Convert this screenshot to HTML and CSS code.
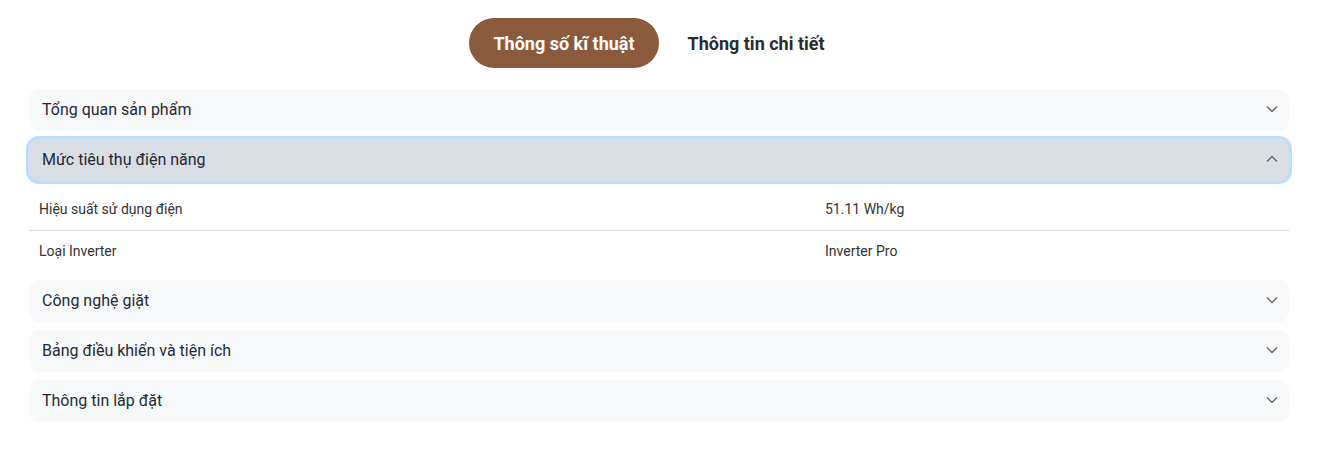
FILE: index.html
```html
<!DOCTYPE html>
<html lang="vi">
<head>
<meta charset="utf-8">
<title>Thông số kĩ thuật</title>
<link rel="stylesheet" href="styles.css">
</head>
<body>
<div class="page">
  <div class="tabs">
    <button class="tab tab-active">Thông số kĩ thuật</button>
    <button class="tab">Thông tin chi tiết</button>
  </div>
  <div class="accordion">
    <div class="item">
      <div class="head"><span>Tổng quan sản phẩm</span>
        <svg class="chev" width="12" height="8" viewBox="0 0 12 8"><path d="M1 1.5 L6 6.5 L11 1.5" fill="none" stroke="#666" stroke-width="1.4"/></svg>
      </div>
    </div>
    <div class="item open">
      <div class="head"><span>Mức tiêu thụ điện năng</span>
        <svg class="chev" width="12" height="8" viewBox="0 0 12 8"><path d="M1 6.5 L6 1.5 L11 6.5" fill="none" stroke="#666" stroke-width="1.4"/></svg>
      </div>
    </div>
    <div class="specs">
      <div class="row"><div class="label">Hiệu suất sử dụng điện</div><div class="value">51.11 Wh/kg</div></div>
      <div class="row"><div class="label">Loại Inverter</div><div class="value">Inverter Pro</div></div>
    </div>
    <div class="item">
      <div class="head"><span>Công nghệ giặt</span>
        <svg class="chev" width="12" height="8" viewBox="0 0 12 8"><path d="M1 1.5 L6 6.5 L11 1.5" fill="none" stroke="#666" stroke-width="1.4"/></svg>
      </div>
    </div>
    <div class="item">
      <div class="head"><span>Bảng điều khiển và tiện ích</span>
        <svg class="chev" width="12" height="8" viewBox="0 0 12 8"><path d="M1 1.5 L6 6.5 L11 1.5" fill="none" stroke="#666" stroke-width="1.4"/></svg>
      </div>
    </div>
    <div class="item">
      <div class="head"><span>Thông tin lắp đặt</span>
        <svg class="chev" width="12" height="8" viewBox="0 0 12 8"><path d="M1 1.5 L6 6.5 L11 1.5" fill="none" stroke="#666" stroke-width="1.4"/></svg>
      </div>
    </div>
  </div>
</div>
</body>
</html>
```
FILE: styles.css
```css
* { box-sizing: border-box; }
html, body { margin: 0; padding: 0; background: #fff; }
body { font-family: Roboto, "Noto Sans", Arial, sans-serif; color: #1f2937; }
.page { padding: 18px 37px 0 29px; }
.tabs { display: flex; justify-content: center; gap: 5px; margin-bottom: 21px; }
.tab {
  font-family: Roboto, Arial, sans-serif;
  font-size: 18px; font-weight: 700;
  height: 50px; padding: 0 24px;
  border: 0; border-radius: 25px;
  background: transparent; color: #2b2b2b;
  cursor: pointer;
}
.tab-active { background: #8b5a3c; color: #fff; }
.accordion { display: flex; flex-direction: column; gap: 8px; }
.item { background: #f8f9fa; border-radius: 10px; }
.head {
  height: 42px; display: flex; align-items: center; justify-content: space-between;
  padding: 0 11px 2px 13px; font-size: 16px; color: #1f2937;
}
.chev { display: block; }
.item.open { background: #d9dee5; box-shadow: 0 0 0 3px #bfdbfe; }
.specs { display: flex; flex-direction: column; }
.row {
  display: grid; grid-template-columns: 786px 1fr;
  box-sizing: content-box;
  height: 39px; padding-bottom: 2px;
  align-items: center; font-size: 14px; color: #333;
}
.row + .row { border-top: 1px solid #dddddd; }
.label { padding-left: 10px; }
.value { padding-left: 10px; }
```
